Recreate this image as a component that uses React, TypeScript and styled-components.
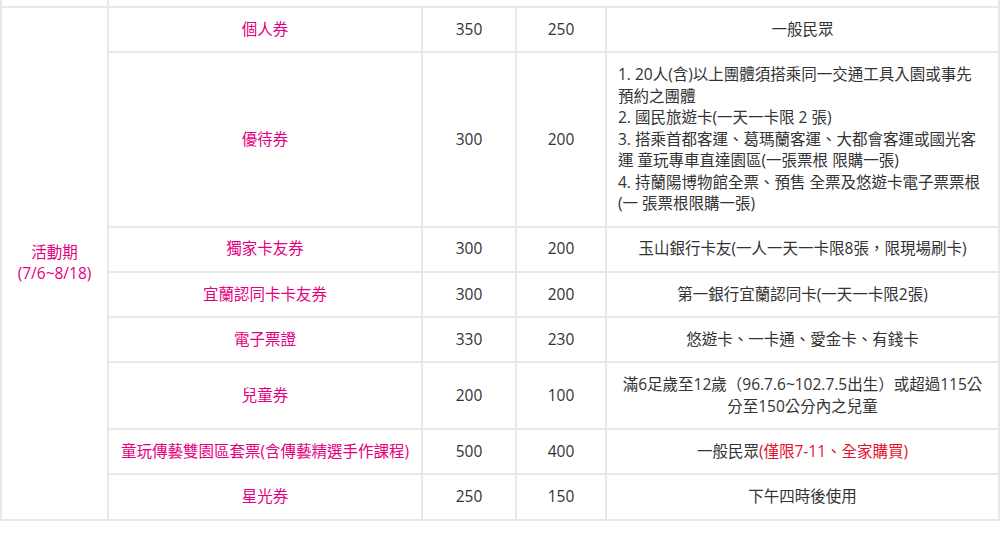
import React from "react";
import styled, { createGlobalStyle } from "styled-components";

const GlobalStyle = createGlobalStyle`
  body {
    margin: 0;
    background: #ffffff;
    font-family: "Open Sans", "Noto Sans CJK TC", sans-serif;
    color: #333333;
  }
`;

const PriceTable = styled.table`
  width: 998px;
  border-collapse: collapse;
  table-layout: fixed;
  font-size: 15.5px;
  line-height: 21.5px;
`;

const Col = styled.col<{ $width: number }>`
  width: ${(p) => p.$width}px;
`;

const Cell = styled.td<{ $align?: "left" | "center" }>`
  border: 2px solid #e8e8e8;
  padding: 10.875px 11px;
  text-align: ${(p) => p.$align ?? "center"};
  vertical-align: middle;
  white-space: nowrap;
`;

const StubCell = styled.td`
  border: 2px solid #e8e8e8;
  border-top: none;
  height: 6px;
  padding: 0;
`;

const TicketName = styled(Cell)`
  color: #e4007f;
`;

const Note = styled.span`
  color: #e60f2d;
`;

type Ticket = {
  name: string;
  full: string;
  discount: string;
  note: React.ReactNode;
  align?: "left" | "center";
};

const tickets: Ticket[] = [
  { name: "個人券", full: "350", discount: "250", note: "一般民眾" },
  {
    name: "優待券",
    full: "300",
    discount: "200",
    align: "left",
    note: (
      <>
        1. 20人(含)以上團體須搭乘同一交通工具入園或事先
        <br />
        預約之團體
        <br />
        2. 國民旅遊卡(一天一卡限 2 張)
        <br />
        3. 搭乘首都客運、葛瑪蘭客運、大都會客運或國光客
        <br />
        運 童玩專車直達園區(一張票根 限購一張)
        <br />
        4. 持蘭陽博物館全票、預售 全票及悠遊卡電子票票根
        <br />
        (一 張票根限購一張)
      </>
    ),
  },
  {
    name: "獨家卡友券",
    full: "300",
    discount: "200",
    note: "玉山銀行卡友(一人一天一卡限8張，限現場刷卡)",
  },
  {
    name: "宜蘭認同卡卡友券",
    full: "300",
    discount: "200",
    note: "第一銀行宜蘭認同卡(一天一卡限2張)",
  },
  {
    name: "電子票證",
    full: "330",
    discount: "230",
    note: "悠遊卡、一卡通、愛金卡、有錢卡",
  },
  {
    name: "兒童券",
    full: "200",
    discount: "100",
    note: (
      <>
        滿6足歲至12歲（96.7.6~102.7.5出生）或超過115公
        <br />
        分至150公分內之兒童
      </>
    ),
  },
  {
    name: "童玩傳藝雙園區套票(含傳藝精選手作課程)",
    full: "500",
    discount: "400",
    note: (
      <>
        一般民眾<Note>(僅限7-11、全家購買)</Note>
      </>
    ),
  },
  { name: "星光券", full: "250", discount: "150", note: "下午四時後使用" },
];

export default function App() {
  return (
    <>
      <GlobalStyle />
      <PriceTable>
        <colgroup>
          <Col $width={107} />
          <Col $width={314} />
          <Col $width={94} />
          <Col $width={90} />
          <Col $width={393} />
        </colgroup>
        <tbody>
          <tr>
            <StubCell />
            <StubCell colSpan={4} />
          </tr>
          {tickets.map((t, i) => (
            <tr key={t.name}>
              {i === 0 && (
                <TicketName rowSpan={tickets.length}>
                  活動期
                  <br />
                  (7/6~8/18)
                </TicketName>
              )}
              <TicketName>{t.name}</TicketName>
              <Cell>{t.full}</Cell>
              <Cell>{t.discount}</Cell>
              <Cell $align={t.align}>{t.note}</Cell>
            </tr>
          ))}
        </tbody>
      </PriceTable>
    </>
  );
}
